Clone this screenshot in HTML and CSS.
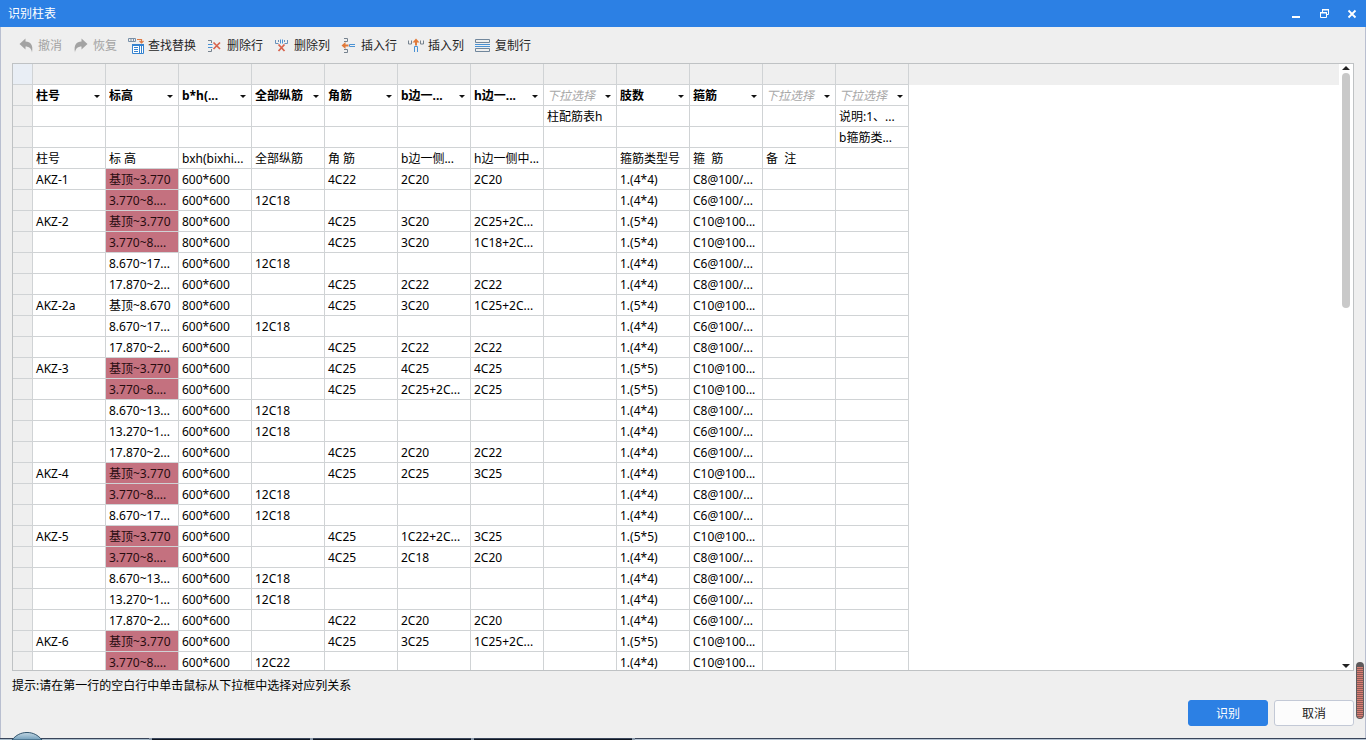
FILE: index.html
```html
<!DOCTYPE html>
<html lang="zh-CN">
<head>
<meta charset="utf-8">
<title>识别柱表</title>
<link rel="stylesheet" href="styles.css">
</head>
<body>
<main class="dialog">
  <header class="titlebar">
    <h1 class="title">识别柱表</h1>
    <div class="window-controls">
      <button type="button" class="window-button" aria-label="最小化"><svg width="12" height="12" viewBox="0 0 12 12"><path d="M2 8h8v2H2z" fill="#fff"/></svg></button>
      <button type="button" class="window-button" aria-label="还原"><svg width="12" height="12" viewBox="0 0 12 12"><path d="M4.500 4V1.500H10.500V6.500H9M2.500 4.500H8.500V9.500H2.500z" fill="none" stroke="#fff"/><path d="M4 1h7v1.500H4zM2 4h7v1.500H2z" fill="#fff"/></svg></button>
      <button type="button" class="window-button" aria-label="关闭"><svg width="12" height="12" viewBox="0 0 12 12"><path d="M2.500 2.500l7 7M9.500 2.500l-7 7" stroke="#fff" stroke-width="1.800"/></svg></button>
    </div>
  </header>

  <nav class="toolbar" aria-label="工具栏">
    <button type="button" class="tool" disabled><svg width="16" height="16" viewBox="0 0 16 16"><path d="M1.500 6L7.500 .500V3.500C12.500 3.500 15.500 7 14 14.500C13.500 10.500 11 8.500 7.500 8.500V11.500z" fill="#a3a3a3"/></svg>撤消</button>
    <button type="button" class="tool" disabled><svg width="16" height="16" viewBox="0 0 16 16"><path d="M14.500 6L8.500 .500V3.500C3.500 3.500 .500 7 2 14.500C2.500 10.500 5 8.500 8.500 8.500V11.500z" fill="#a3a3a3"/></svg>恢复</button>
    <button type="button" class="tool"><svg width="16" height="16" viewBox="0 0 16 16"><path d="M.500 .500h7v3h-7zM3 .500v3M5.500 .500v3" fill="none" stroke="#7890a8"/><path d="M9 1.500h4.500V4.500M11.500 3l2 2 2-2" fill="none" stroke="#dc7a45" stroke-width="1.200"/><path d="M4.500 6.500h11v9h-11z" fill="#fff" stroke="#3683cf"/><path d="M4 6h12v2H4z" fill="#3683cf"/><path d="M6 9.500h4M6 11.500h4M6 13.500h4" stroke="#3683cf"/><path d="M11.500 8v7M13.500 8v7" stroke="#3683cf"/></svg>查找替换</button>
    <button type="button" class="tool"><svg width="16" height="16" viewBox="0 0 16 16"><path d="M1 2.500h3.500v2.500M1 13.500h3.500V11" fill="none" stroke="#76828e"/><path d="M1 6.500h4.500M1 9.500h4.500" stroke="#4a92d4"/><path d="M6.500 4.500l6.500 6.500M13 4.500l-6.500 6.500" stroke="#d8644e" stroke-width="1.700"/></svg>删除行</button>
    <button type="button" class="tool"><svg width="16" height="16" viewBox="0 0 16 16"><path d="M1.500 2v3.500h3M13.500 2v3.500h-3M4.500 2v2M10.500 2v2" fill="none" stroke="#6790ba"/><path d="M6.500 1.500v4M8.500 1.500v4" stroke="#4a92d4"/><path d="M4.500 6.500l6 6.500M10.500 6.500L4.500 13" stroke="#d8644e" stroke-width="1.800"/></svg>删除列</button>
    <button type="button" class="tool"><svg width="16" height="16" viewBox="0 0 16 16"><path d="M3 .500h3.500v3H3M3 11.500h3.500v3H3" fill="none" stroke="#76828e"/><path d="M.500 7.500l4-3.500V6.500h3v2h-3V11z" fill="#e17a39"/><path d="M14 6.500H8.500v2H14" fill="none" stroke="#4a92d4"/></svg>插入行</button>
    <button type="button" class="tool"><svg width="16" height="16" viewBox="0 0 16 16"><path d="M.500 2.500v3.500h3V2.500M12.500 2.500v3.500h3V2.500" fill="none" stroke="#76828e"/><path d="M8 .500l3.500 4H9v3H7v-3H4.500z" fill="#e17a39"/><path d="M6.500 14V8.500h3V14" fill="none" stroke="#4a92d4"/></svg>插入列</button>
    <button type="button" class="tool"><svg width="16" height="16" viewBox="0 0 16 16"><path d="M.500 1.500h14v3H.500zM.500 10.500h14v3H.500z" fill="none" stroke="#71879c"/><path d="M0 6.500h15M0 8.500h15" stroke="#4a92d4"/></svg>复制行</button>
  </nav>

  <section class="sheet">
    <div class="sheet-view">
      <table class="grid">
        <colgroup><col class="col-index"><col span="12" class="col-data"></colgroup>
        <thead>
          <tr class="letters"><th class="corner"></th><th></th><th></th><th></th><th></th><th></th><th></th><th></th><th></th><th></th><th></th><th></th><th></th></tr>
          <tr class="mapping">
            <th></th>
            <th><div class="picker"><select aria-label="第1列"><option>柱号</option></select></div></th>
            <th><div class="picker"><select aria-label="第2列"><option>标高</option></select></div></th>
            <th><div class="picker"><select aria-label="第3列"><option>b*h(...</option></select></div></th>
            <th><div class="picker"><select aria-label="第4列"><option>全部纵筋</option></select></div></th>
            <th><div class="picker"><select aria-label="第5列"><option>角筋</option></select></div></th>
            <th><div class="picker"><select aria-label="第6列"><option>b边一...</option></select></div></th>
            <th><div class="picker"><select aria-label="第7列"><option>h边一...</option></select></div></th>
            <th><div class="picker unset"><select aria-label="第8列"><option>下拉选择</option></select></div></th>
            <th><div class="picker"><select aria-label="第9列"><option>肢数</option></select></div></th>
            <th><div class="picker"><select aria-label="第10列"><option>箍筋</option></select></div></th>
            <th><div class="picker unset"><select aria-label="第11列"><option>下拉选择</option></select></div></th>
            <th><div class="picker unset"><select aria-label="第12列"><option>下拉选择</option></select></div></th>
          </tr>
        </thead>
        <tbody>
          <tr><th></th><td></td><td></td><td></td><td></td><td></td><td></td><td></td><td>柱配筋表h</td><td></td><td></td><td></td><td>说明:1、...</td></tr>
          <tr><th></th><td></td><td></td><td></td><td></td><td></td><td></td><td></td><td></td><td></td><td></td><td></td><td>b箍筋类...</td></tr>
          <tr><th></th><td>柱号</td><td>标 高</td><td>bxh(bixhi...</td><td>全部纵筋</td><td>角 筋</td><td>b边一侧...</td><td>h边一侧中...</td><td></td><td>箍筋类型号</td><td>箍&nbsp; 筋</td><td>备&nbsp; 注</td><td></td></tr>
          <tr><th></th><td>AKZ-1</td><td class="error">基顶~3.770</td><td>600*600</td><td></td><td>4C22</td><td>2C20</td><td>2C20</td><td></td><td>1.(4*4)</td><td>C8@100/...</td><td></td><td></td></tr>
          <tr><th></th><td></td><td class="error">3.770~8....</td><td>600*600</td><td>12C18</td><td></td><td></td><td></td><td></td><td>1.(4*4)</td><td>C6@100/...</td><td></td><td></td></tr>
          <tr><th></th><td>AKZ-2</td><td class="error">基顶~3.770</td><td>800*600</td><td></td><td>4C25</td><td>3C20</td><td>2C25+2C...</td><td></td><td>1.(5*4)</td><td>C10@100...</td><td></td><td></td></tr>
          <tr><th></th><td></td><td class="error">3.770~8....</td><td>800*600</td><td></td><td>4C25</td><td>3C20</td><td>1C18+2C...</td><td></td><td>1.(5*4)</td><td>C10@100...</td><td></td><td></td></tr>
          <tr><th></th><td></td><td>8.670~17...</td><td>600*600</td><td>12C18</td><td></td><td></td><td></td><td></td><td>1.(4*4)</td><td>C6@100/...</td><td></td><td></td></tr>
          <tr><th></th><td></td><td>17.870~2...</td><td>600*600</td><td></td><td>4C25</td><td>2C22</td><td>2C22</td><td></td><td>1.(4*4)</td><td>C8@100/...</td><td></td><td></td></tr>
          <tr><th></th><td>AKZ-2a</td><td>基顶~8.670</td><td>800*600</td><td></td><td>4C25</td><td>3C20</td><td>1C25+2C...</td><td></td><td>1.(5*4)</td><td>C10@100...</td><td></td><td></td></tr>
          <tr><th></th><td></td><td>8.670~17...</td><td>600*600</td><td>12C18</td><td></td><td></td><td></td><td></td><td>1.(4*4)</td><td>C6@100/...</td><td></td><td></td></tr>
          <tr><th></th><td></td><td>17.870~2...</td><td>600*600</td><td></td><td>4C25</td><td>2C22</td><td>2C22</td><td></td><td>1.(4*4)</td><td>C8@100/...</td><td></td><td></td></tr>
          <tr><th></th><td>AKZ-3</td><td class="error">基顶~3.770</td><td>600*600</td><td></td><td>4C25</td><td>4C25</td><td>4C25</td><td></td><td>1.(5*5)</td><td>C10@100...</td><td></td><td></td></tr>
          <tr><th></th><td></td><td class="error">3.770~8....</td><td>600*600</td><td></td><td>4C25</td><td>2C25+2C...</td><td>2C25</td><td></td><td>1.(5*5)</td><td>C10@100...</td><td></td><td></td></tr>
          <tr><th></th><td></td><td>8.670~13...</td><td>600*600</td><td>12C18</td><td></td><td></td><td></td><td></td><td>1.(4*4)</td><td>C8@100/...</td><td></td><td></td></tr>
          <tr><th></th><td></td><td>13.270~1...</td><td>600*600</td><td>12C18</td><td></td><td></td><td></td><td></td><td>1.(4*4)</td><td>C6@100/...</td><td></td><td></td></tr>
          <tr><th></th><td></td><td>17.870~2...</td><td>600*600</td><td></td><td>4C25</td><td>2C20</td><td>2C22</td><td></td><td>1.(4*4)</td><td>C6@100/...</td><td></td><td></td></tr>
          <tr><th></th><td>AKZ-4</td><td class="error">基顶~3.770</td><td>600*600</td><td></td><td>4C25</td><td>2C25</td><td>3C25</td><td></td><td>1.(4*4)</td><td>C10@100...</td><td></td><td></td></tr>
          <tr><th></th><td></td><td class="error">3.770~8....</td><td>600*600</td><td>12C18</td><td></td><td></td><td></td><td></td><td>1.(4*4)</td><td>C8@100/...</td><td></td><td></td></tr>
          <tr><th></th><td></td><td>8.670~17...</td><td>600*600</td><td>12C18</td><td></td><td></td><td></td><td></td><td>1.(4*4)</td><td>C6@100/...</td><td></td><td></td></tr>
          <tr><th></th><td>AKZ-5</td><td class="error">基顶~3.770</td><td>600*600</td><td></td><td>4C25</td><td>1C22+2C...</td><td>3C25</td><td></td><td>1.(5*5)</td><td>C10@100...</td><td></td><td></td></tr>
          <tr><th></th><td></td><td class="error">3.770~8....</td><td>600*600</td><td></td><td>4C25</td><td>2C18</td><td>2C20</td><td></td><td>1.(4*4)</td><td>C8@100/...</td><td></td><td></td></tr>
          <tr><th></th><td></td><td>8.670~13...</td><td>600*600</td><td>12C18</td><td></td><td></td><td></td><td></td><td>1.(4*4)</td><td>C8@100/...</td><td></td><td></td></tr>
          <tr><th></th><td></td><td>13.270~1...</td><td>600*600</td><td>12C18</td><td></td><td></td><td></td><td></td><td>1.(4*4)</td><td>C6@100/...</td><td></td><td></td></tr>
          <tr><th></th><td></td><td>17.870~2...</td><td>600*600</td><td></td><td>4C22</td><td>2C20</td><td>2C20</td><td></td><td>1.(4*4)</td><td>C6@100/...</td><td></td><td></td></tr>
          <tr><th></th><td>AKZ-6</td><td class="error">基顶~3.770</td><td>600*600</td><td></td><td>4C25</td><td>3C25</td><td>1C25+2C...</td><td></td><td>1.(5*5)</td><td>C10@100...</td><td></td><td></td></tr>
          <tr><th></th><td></td><td class="error">3.770~8....</td><td>600*600</td><td>12C22</td><td></td><td></td><td></td><td></td><td>1.(4*4)</td><td>C10@100...</td><td></td><td></td></tr>
        </tbody>
      </table>
    </div>
    <div class="scrollbar" aria-hidden="true">
      <span class="arrow-up"></span>
      <span class="track"><span class="thumb"></span></span>
      <span class="arrow-down"></span>
    </div>
  </section>

  <footer class="footer">
    <p class="hint">提示:请在第一行的空白行中单击鼠标从下拉框中选择对应列关系</p>
    <div class="actions">
      <button type="button" class="action primary">识别</button>
      <button type="button" class="action">取消</button>
    </div>
  </footer>
  <span class="level-meter" aria-hidden="true"></span>
</main>
<div class="taskbar" aria-hidden="true">
  <svg class="orb" width="32" height="8" viewBox="0 0 32 8"><defs><linearGradient id="orb-fill" x1="0" y1="0" x2="0" y2="1"><stop offset="0" stop-color="#c3d7e4"/><stop offset="1" stop-color="#6f9dba"/></linearGradient></defs><path d="M1 8C5 3 10 .500 16 .500S27 3 31 8z" fill="url(#orb-fill)" stroke="#2f536c"/></svg>
  <span class="task wide"></span><span class="task"></span><span class="task"></span><span class="task"></span><span class="task rest"></span>
</div>
</body>
</html>
```

FILE: styles.css
```css
* { box-sizing: border-box; }

body {
  margin: 0;
  height: 100vh;
  display: flex;
  flex-direction: column;
  overflow: hidden;
  background: #efefef;
  color: #000;
  font: 12px/20px "Noto Sans", "Noto Sans CJK SC", sans-serif;
}

button, select { font: inherit; color: inherit; }

.dialog {
  position: relative;
  flex: 1;
  min-height: 0;
  display: flex;
  flex-direction: column;
  border: solid #b9bfd0;
  border-width: 0 1px;
}

.titlebar {
  display: flex;
  align-items: center;
  justify-content: space-between;
  height: 27px;
  margin: 0 -1px;
  padding: 0 8px;
  background: #2c80e4;
  color: #fff;
}

.title { margin: 0; font-size: 12px; font-weight: 400; }

.window-controls { display: flex; gap: 16px; }

.window-button {
  display: flex;
  padding: 0;
  border: 0;
  background: none;
}

.toolbar {
  display: flex;
  align-items: center;
  gap: 11px;
  height: 36px;
  padding: 2px 17px 0;
}

.tool {
  display: flex;
  align-items: center;
  gap: 4px;
  padding: 0;
  border: 0;
  background: none;
  color: #262626;
  white-space: nowrap;
}

.tool:disabled { color: #a3a3a3; }

.sheet {
  flex: 1;
  min-height: 0;
  display: flex;
  margin: 0 11px;
  border: 1px solid #bfc2c4;
  background: #fff;
}

.sheet-view {
  flex: 1;
  min-width: 0;
  overflow: hidden;
  background: linear-gradient(#efefef 21px, #fff 21px);
}

.grid {
  width: 896px;
  table-layout: fixed;
  border-collapse: separate;
  border-spacing: 0;
}

.col-index { width: 20px; }
.col-data { width: 73px; }

.grid th, .grid td {
  height: 21px;
  padding: 2px 0 0 3px;
  overflow: hidden;
  border: solid #d0d3d5;
  border-width: 0 1px 1px 0;
  line-height: 18px;
  text-align: left;
  white-space: nowrap;
}

.grid th:first-child { background: #efefef; }
.grid .corner:first-child { background: #e9eef5; }
.grid .error { background: #c4717f; color: #280c10; }
.grid .mapping th { padding: 0; }

.picker { position: relative; height: 20px; }

.picker::after {
  content: "";
  position: absolute;
  top: 10px;
  right: 5px;
  border: solid transparent;
  border-width: 3px 3px 0;
  border-top-color: #111;
  pointer-events: none;
}

.picker select {
  display: block;
  width: 100%;
  height: 20px;
  padding: 2px 0 0 3px;
  border: 0;
  background: none;
  appearance: none;
  font-weight: 700;
}

.unset select {
  color: #a8a8a8;
  font-weight: 400;
  font-style: italic;
}

.scrollbar {
  display: flex;
  flex-direction: column;
  align-items: center;
  width: 14px;
  padding: 2px 0;
}

.arrow-up, .arrow-down { border: 4px solid transparent; }
.arrow-up { border-top: 0; border-bottom-color: #222; }
.arrow-down { border-bottom: 0; border-top-color: #222; }
.track { flex: 1; width: 8px; padding: 3px 0; }

.thumb {
  display: block;
  height: 40%;
  border-radius: 4px;
  background: #c9c9c9;
}

.footer { padding: 5px 11px 12px; }
.hint { margin: 0 0 4px; }
.actions { display: flex; justify-content: flex-end; gap: 6px; }

.action {
  width: 80px;
  height: 26px;
  padding: 1px 0 0;
  border: 1px solid #c3c9d6;
  border-radius: 3px;
  background: #fcfcfc;
  color: #222;
}

.primary { border-color: #2c80e4; background: #2c80e4; color: #fff; }

.level-meter {
  position: absolute;
  right: 1px;
  bottom: 19px;
  width: 8px;
  height: 57px;
  border: 1px solid #5e5a5c;
  border-top-width: 5px;
  border-radius: 4px;
  background: repeating-linear-gradient(#d87d72 0 1px, #8d5b57 1px 2px);
}

.taskbar {
  position: relative;
  display: flex;
  gap: 3px;
  height: 2px;
  background: #8b9aab;
}

.orb { position: absolute; left: 11px; bottom: 0; }
.task { width: 158px; border-top: 1px solid #39455a; background: #101722; }
.wide { width: 149px; background: #a9bccb; }
.rest { flex: 1; background: #b7c5d4; }
```
